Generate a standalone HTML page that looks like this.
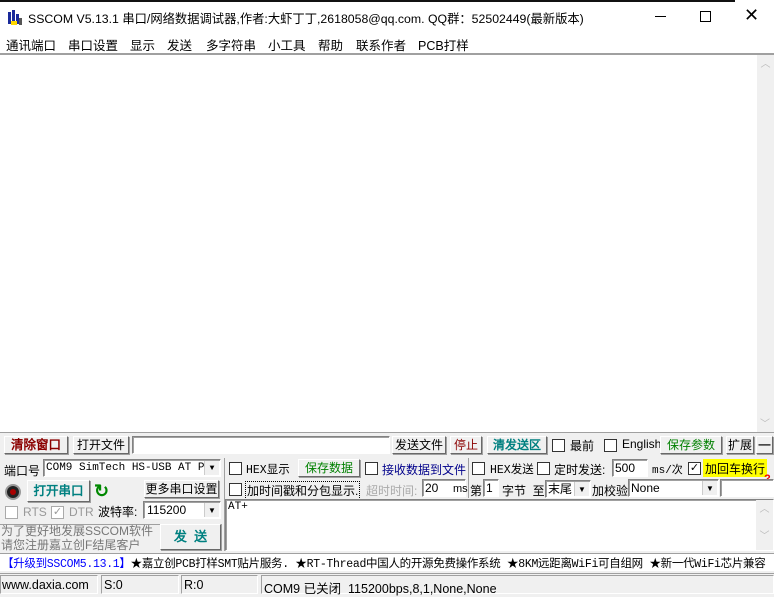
<!DOCTYPE html>
<html><head><meta charset="utf-8"><style>
*{margin:0;padding:0;box-sizing:border-box}
body{width:774px;height:596px;overflow:hidden;background:#f0f0f0;font:12px "Liberation Sans","WenQuanYi Zen Hei",sans-serif;color:#000;position:relative}
.a{position:absolute;white-space:nowrap}
.btn{position:absolute;background:#f0f0f0;border:1px solid;border-color:#fff #696969 #696969 #fff;box-shadow:1px 1px 0 #a0a0a0;text-align:center;white-space:nowrap}
.in{position:absolute;background:#fff;border:1px solid;border-color:#828282 #fff #fff #828282;box-shadow:inset 1px 1px 0 #a0a0a0;white-space:nowrap;overflow:hidden}
.cb{position:absolute;width:13px;height:13px;background:#fff;border:1px solid #333;font-size:11px;line-height:11px;text-align:center}
.dd{position:absolute;right:1px;top:1px;bottom:1px;width:15px;background:#f0f0f0;border-left:1px solid #ccc;font-size:8px;text-align:center}
.mono{font-family:"Liberation Mono","WenQuanYi Zen Hei",monospace}
.m{position:absolute;top:35px;font-size:12.5px}
</style></head><body>
<div class="a" style="left:0;top:0;width:774px;height:33px;background:#fff"></div>
<div class="a" style="left:0;top:0;width:735px;height:2px;background:#111"></div>
<svg class="a" style="left:7px;top:10px" width="16" height="16"><rect x="1" y="2" width="3" height="12" fill="#1a2a9a"/><rect x="5" y="0" width="3" height="14" fill="#1a2a9a"/><rect x="9" y="4" width="3" height="10" fill="#1a2a9a"/><rect x="4" y="11" width="6" height="4" fill="#ffd800"/><rect x="12" y="8" width="3" height="7" fill="#555"/></svg>
<div class="a" style="left:28px;top:9px;font-size:12.3px">SSCOM V5.13.1 串口/网络数据调试器,作者:大虾丁丁,2618058@qq.com. QQ群：52502449(最新版本)</div>
<div class="a" style="left:655px;top:16px;width:11px;height:1px;background:#000"></div>
<div class="a" style="left:700px;top:11px;width:11px;height:11px;border:1px solid #000"></div>
<div class="a" style="left:744px;top:5px;font-size:18px">✕</div>
<div class="a" style="left:0;top:33px;width:774px;height:20px;background:#fff"></div>
<div class="m" style="left:6px">通讯端口</div>
<div class="m" style="left:68px">串口设置</div>
<div class="m" style="left:130px">显示</div>
<div class="m" style="left:167px">发送</div>
<div class="m" style="left:206px">多字符串</div>
<div class="m" style="left:268px">小工具</div>
<div class="m" style="left:318px">帮助</div>
<div class="m" style="left:356px">联系作者</div>
<div class="m" style="left:418px">PCB打样</div>
<div class="a" style="left:0;top:53px;width:774px;height:2px;background:#a0a0a0"></div>
<div class="a" style="left:0;top:55px;width:757px;height:377px;background:#fff"></div>
<div class="a" style="left:757px;top:55px;width:17px;height:377px;background:#f0f0f0;color:#bbb;font-size:10px;text-align:center">︿<div style="position:absolute;bottom:2px;left:3px">﹀</div></div>
<div class="a" style="left:0;top:432px;width:774px;height:1px;background:#a0a0a0"></div>

<div class="btn" style="left:4px;top:436px;width:64px;height:18px;color:#8b0000;font-weight:bold;font-size:12.5px;line-height:16px">清除窗口</div>
<div class="btn" style="left:73px;top:436px;width:56px;height:18px;line-height:16px">打开文件</div>
<div class="in" style="left:132px;top:436px;width:258px;height:18px"></div>
<div class="btn" style="left:392px;top:436px;width:54px;height:18px;line-height:16px">发送文件</div>
<div class="btn" style="left:450px;top:436px;width:32px;height:18px;line-height:16px;color:#8b0000">停止</div>
<div class="btn" style="left:487px;top:436px;width:60px;height:18px;line-height:16px;color:#008080;font-weight:bold">清发送区</div>
<div class="cb" style="left:552px;top:439px"></div><div class="a" style="left:570px;top:437px">最前</div>
<div class="cb" style="left:604px;top:439px"></div><div class="a" style="left:622px;top:437px">English</div>
<div class="btn" style="left:660px;top:436px;width:62px;height:18px;line-height:16px;color:#008000">保存参数</div>
<div class="btn" style="left:726px;top:436px;width:28px;height:18px;line-height:16px">扩展</div>
<div class="btn" style="left:756px;top:436px;width:17px;height:18px;line-height:14px;font-weight:bold">—</div>

<div class="a" style="left:4px;top:462px">端口号</div>
<div class="in mono" style="left:43px;top:459px;width:178px;height:18px;font-size:11px;line-height:16px;padding-left:2px">COM9 SimTech HS-USB AT Por<div class="dd">▼</div></div>
<div class="a" style="left:5px;top:484px;width:16px;height:16px;border-radius:50%;background:#222;border:2px solid #999"><div style="margin:3px;width:6px;height:6px;border-radius:50%;background:#a00"></div></div>
<div class="btn" style="left:27px;top:480px;width:63px;height:22px;line-height:20px;color:#008080;font-weight:bold;font-size:12.5px">打开串口</div>
<div class="a" style="left:94px;top:481px;color:#080;font-size:18px;font-weight:bold">↻</div>
<div class="btn" style="left:144px;top:480px;width:75px;height:18px;line-height:16px">更多串口设置</div>
<div class="cb" style="left:5px;top:506px;border-color:#aaa"></div><div class="a" style="left:23px;top:505px;color:#999">RTS</div>
<div class="cb" style="left:51px;top:506px;border-color:#aaa;color:#999">✓</div><div class="a" style="left:69px;top:505px;color:#999">DTR</div>
<div class="a" style="left:98px;top:503px">波特率:</div>
<div class="in" style="left:143px;top:501px;width:78px;height:18px;line-height:16px;padding-left:3px">115200<div class="dd">▼</div></div>
<div class="a" style="left:0;top:524px;width:222px;height:1px;background:#a0a0a0"></div>
<div class="a" style="left:1px;top:524px;color:#777;line-height:14px">为了更好地发展SSCOM软件<br>请您注册嘉立创F结尾客户</div>
<div class="btn" style="left:160px;top:524px;width:61px;height:26px;line-height:24px;color:#008080;font-weight:bold;font-size:13px">发&nbsp;&nbsp;送</div>
<div class="a" style="left:224px;top:458px;width:1px;height:93px;background:#a0a0a0"></div>

<div class="cb" style="left:229px;top:462px"></div><div class="a mono" style="left:246px;top:461px;font-size:11.5px">HEX显示</div>
<div class="btn" style="left:298px;top:459px;width:62px;height:18px;line-height:16px;color:#008000">保存数据</div>
<div class="cb" style="left:365px;top:462px"></div><div class="a" style="left:382px;top:461px;color:#00008b">接收数据到文件</div>
<div class="a" style="left:468px;top:458px;width:1px;height:40px;background:#a0a0a0"></div>
<div class="cb" style="left:472px;top:462px"></div><div class="a mono" style="left:490px;top:461px;font-size:11.5px">HEX发送</div>
<div class="cb" style="left:537px;top:462px"></div><div class="a" style="left:554px;top:461px">定时发送:</div>
<div class="in" style="left:612px;top:459px;width:36px;height:18px;line-height:16px;padding-left:2px">500</div>
<div class="a mono" style="left:652px;top:461px;font-size:11px">ms/次</div>
<div class="cb" style="left:688px;top:462px">✓</div>
<div class="a" style="left:703px;top:459px;background:#ff0;padding:1px 2px;height:18px">加回车换行</div>
<div class="a" style="left:764px;top:473px;color:#e00;font-weight:bold;font-size:11px">?</div>

<div class="cb" style="left:229px;top:483px"></div>
<div class="a" style="left:245px;top:481px;border:1px dotted #000;padding:0 1px">加时间戳和分包显示.</div>
<div class="a" style="left:366px;top:482px;color:#aaa">超时时间:</div>
<div class="in" style="left:422px;top:479px;width:44px;height:18px;line-height:16px;padding-left:2px">20</div>
<div class="a" style="left:453px;top:483px;font-size:11px">ms</div>
<div class="a" style="left:470px;top:482px">第</div>
<div class="in" style="left:483px;top:479px;width:16px;height:18px;line-height:16px;padding-left:2px">1</div>
<div class="a" style="left:502px;top:482px">字节&nbsp; 至</div>
<div class="in" style="left:545px;top:480px;width:46px;height:18px;line-height:16px;padding-left:2px">末尾<div class="dd">▼</div></div>
<div class="a" style="left:592px;top:482px">加校验</div>
<div class="in" style="left:628px;top:479px;width:91px;height:18px;line-height:16px;padding-left:2px">None<div class="dd">▼</div></div>
<div class="in" style="left:720px;top:479px;width:54px;height:18px"></div>

<div class="in mono" style="left:225px;top:499px;width:549px;height:52px;font-size:11px;padding:1px 2px">AT+<div style="position:absolute;right:0;top:0;width:17px;height:50px;background:#f0f0f0;color:#bbb;text-align:center;font-size:10px">︿<br><br>﹀</div></div>

<div class="a" style="left:0;top:553px;width:774px;height:18px;background:#fff;border-top:1px solid #a0a0a0"></div>
<div class="a mono" style="left:2px;top:555px;font-size:11.5px;letter-spacing:-0.3px"><span style="color:#00f">【升级到SSCOM5.13.1】</span>★嘉立创PCB打样SMT贴片服务. ★RT-Thread中国人的开源免费操作系统 ★8KM远距离WiFi可自组网 ★新一代WiFi芯片兼容</div>

<div class="a" style="left:0;top:573px;width:774px;height:1px;background:#a0a0a0"></div>
<div class="a" style="left:0;top:575px;width:98px;height:19px;border:1px solid;border-color:#a0a0a0 #fff #fff #a0a0a0;padding:2px 1px;font-size:12.5px">www.daxia.com</div>
<div class="a" style="left:101px;top:575px;width:78px;height:19px;border:1px solid;border-color:#a0a0a0 #fff #fff #a0a0a0;padding:2px 2px;font-size:12.5px">S:0</div>
<div class="a" style="left:181px;top:575px;width:77px;height:19px;border:1px solid;border-color:#a0a0a0 #fff #fff #a0a0a0;padding:2px 2px;font-size:12.5px">R:0</div>
<div class="a" style="left:261px;top:575px;width:513px;height:19px;border:1px solid;border-color:#a0a0a0 #fff #fff #a0a0a0;padding:2px 2px;font-size:12.5px">COM9 已关闭&nbsp; 115200bps,8,1,None,None</div>
</body></html>
